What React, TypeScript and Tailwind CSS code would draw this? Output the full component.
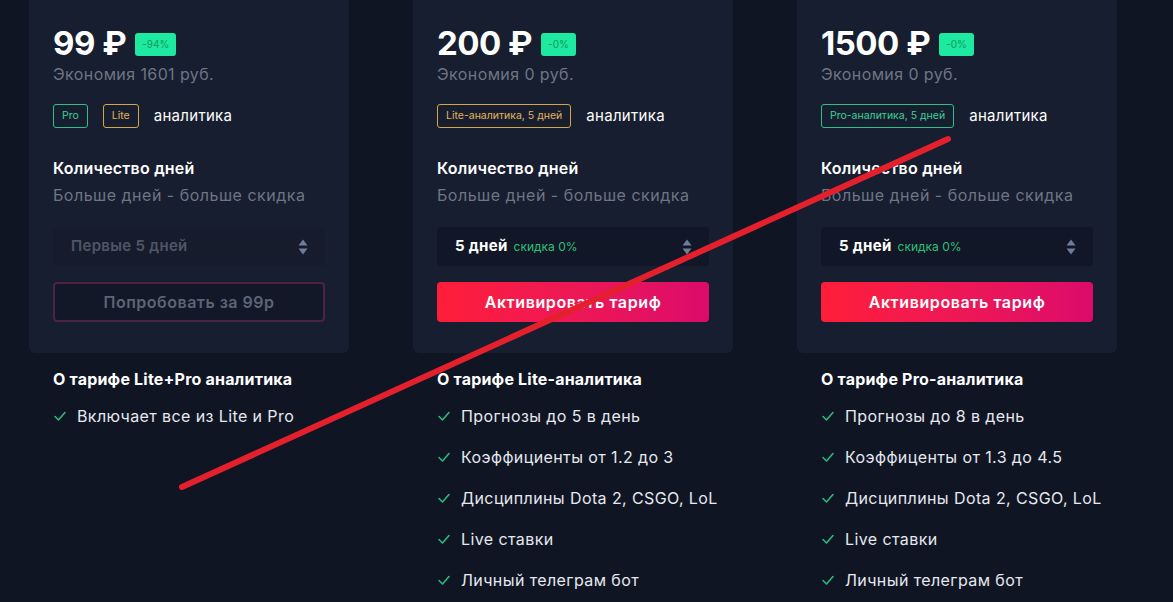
import React from "react";

type Plan = {
  price: string;
  discount: string;
  saving: string;
  tags: { label: string; color: "green" | "amber" }[];
  select: "disabled" | "active";
  button: "outline" | "gradient";
  buttonText: string;
  aboutTitle: string;
  features: string[];
};

const plans: Plan[] = [
  {
    price: "99 ₽",
    discount: "-94%",
    saving: "Экономия 1601 руб.",
    tags: [
      { label: "Pro", color: "green" },
      { label: "Lite", color: "amber" },
    ],
    select: "disabled",
    button: "outline",
    buttonText: "Попробовать за 99р",
    aboutTitle: "О тарифе Lite+Pro аналитика",
    features: ["Включает все из Lite и Pro"],
  },
  {
    price: "200 ₽",
    discount: "-0%",
    saving: "Экономия 0 руб.",
    tags: [{ label: "Lite-аналитика, 5 дней", color: "amber" }],
    select: "active",
    button: "gradient",
    buttonText: "Активировать тариф",
    aboutTitle: "О тарифе Lite-аналитика",
    features: [
      "Прогнозы до 5 в день",
      "Коэффициенты от 1.2 до 3",
      "Дисциплины Dota 2, CSGO, LoL",
      "Live ставки",
      "Личный телеграм бот",
    ],
  },
  {
    price: "1500 ₽",
    discount: "-0%",
    saving: "Экономия 0 руб.",
    tags: [{ label: "Pro-аналитика, 5 дней", color: "green" }],
    select: "active",
    button: "gradient",
    buttonText: "Активировать тариф",
    aboutTitle: "О тарифе Pro-аналитика",
    features: [
      "Прогнозы до 8 в день",
      "Коэффиценты от 1.3 до 4.5",
      "Дисциплины Dota 2, CSGO, LoL",
      "Live ставки",
      "Личный телеграм бот",
    ],
  },
];

function Arrows() {
  return (
    <svg width="10" height="16" viewBox="0 0 10 16" className="shrink-0">
      <path d="M5 0.5 L9.5 6.5 L0.5 6.5 Z" fill="#6f7d99" />
      <path d="M5 15.5 L9.5 9.5 L0.5 9.5 Z" fill="#6f7d99" />
    </svg>
  );
}

function Check() {
  return (
    <svg width="14" height="14" viewBox="0 0 14 14" className="shrink-0">
      <path d="M2 7.5 L5.5 11 L12 3.5" fill="none" stroke="#2fb77f" strokeWidth="1.6" strokeLinecap="round" strokeLinejoin="round" />
    </svg>
  );
}

function Card({ p }: { p: Plan }) {
  return (
    <div className="flex flex-col">
      <div className="bg-[#171e2f] rounded-b-[6px] px-6 pt-[24px] pb-[32px] h-[353px]">
        <div className="flex items-center gap-[9px] h-[38px]">
          <span className="text-[33px] font-bold text-white leading-none tracking-[-0.5px]">{p.price}</span>
          <span className="bg-[#1de9a0] text-[#0f9a5e] text-[10px] rounded-[3px] h-[23px] px-[7px] flex items-center mt-[2px]">
            {p.discount}
          </span>
        </div>
        <div className="text-[16px] text-[#6e7585] mt-[2px] leading-[20px] tracking-[0.4px]">{p.saving}</div>
        <div className="flex items-center mt-[20px] h-[24px]">
          {p.tags.map((t, i) => (
            <span
              key={i}
              className={
                "h-[24px] px-[8px] rounded-[3px] border text-[10.5px] flex items-center mr-[15px] " +
                (t.color === "green"
                  ? "border-[#2fbf87] text-[#3fcf95]"
                  : "border-[#d3a64a] text-[#e0b45a]")
              }
            >
              {t.label}
            </span>
          ))}
          <span className="text-white text-[15px] tracking-[0.3px]">аналитика</span>
        </div>
        <div className="text-white text-[16px] font-semibold mt-[30px] leading-[20px] tracking-[0.2px]">Количество дней</div>
        <div className="text-[#6e7585] text-[16px] mt-[7px] leading-[20px] tracking-[0.5px]">Больше дней - больше скидка</div>
        {p.select === "disabled" ? (
          <div className="mt-[22px] h-[39px] rounded-[4px] bg-[#161c2b] flex items-center justify-between pl-[18px] pr-[17px]">
            <span className="text-[#4f5668] text-[15px] font-semibold tracking-[0.3px]">Первые 5 дней</span>
            <Arrows />
          </div>
        ) : (
          <div className="mt-[22px] h-[39px] rounded-[4px] bg-[#111726] flex items-center justify-between pl-[18px] pr-[17px]">
            <span className="flex items-baseline gap-[6px]">
              <span className="text-white text-[15px] font-bold tracking-[0.3px]">5 дней</span>
              <span className="text-[#2fbf7a] text-[12px]">скидка 0%</span>
            </span>
            <Arrows />
          </div>
        )}
        {p.button === "outline" ? (
          <div className="mt-[16px] h-[40px] rounded-[4px] border-2 border-[#4a2440] bg-[#121827] flex items-center justify-center text-[#5d6475] text-[16px] font-semibold tracking-[0.5px]">
            {p.buttonText}
          </div>
        ) : (
          <div className="mt-[16px] h-[40px] rounded-[4px] bg-gradient-to-r from-[#ff1e38] to-[#dc0a6a] flex items-center justify-center text-white text-[16px] font-semibold tracking-[0.6px]">
            {p.buttonText}
          </div>
        )}
      </div>
      <div className="px-6 pt-[16px]">
        <div className="text-white text-[16px] font-bold leading-[20px] tracking-[0.2px] whitespace-nowrap">{p.aboutTitle}</div>
        <div className="mt-[6px] flex flex-col">
          {p.features.map((f, i) => (
            <div key={i} className="flex items-center h-[41px] gap-[10px]">
              <Check />
              <span className="text-[#e6e8ee] text-[16px] tracking-[0.4px] whitespace-nowrap">{f}</span>
            </div>
          ))}
        </div>
      </div>
    </div>
  );
}

export default function App() {
  return (
    <div
      className="relative w-[1173px] h-[602px] overflow-hidden bg-[#101524]"
      style={{ fontFamily: "Inter, 'Noto Sans', sans-serif" }}
    >
      <div className="grid grid-cols-[320px_320px_320px] gap-[64px] pl-[29px]">
        {plans.map((p, i) => (
          <Card key={i} p={p} />
        ))}
      </div>
      <svg className="absolute inset-0 pointer-events-none" width="1173" height="602">
        <line x1="182" y1="487" x2="948" y2="139" stroke="#e4202c" strokeWidth="6" strokeLinecap="round" />
      </svg>
    </div>
  );
}
